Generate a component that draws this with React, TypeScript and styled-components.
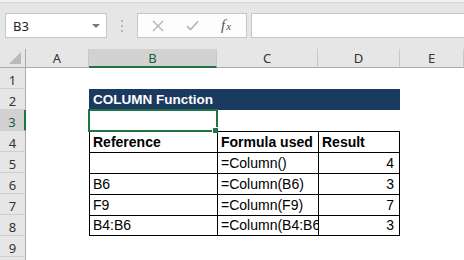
import React from 'react'
import styled, { createGlobalStyle, css } from 'styled-components'

const green = '#217346'
const chrome = '#e6e6e6'

const GlobalStyle = createGlobalStyle`
  html, body { margin: 0; padding: 0; background: #fff; }
  body {
    width: 464px;
    height: 260px;
    overflow: hidden;
    font-family: 'Liberation Sans', Arial, sans-serif;
  }
`

const Window = styled.div`
  display: flex;
  flex-direction: column;
  width: 464px;
  height: 260px;
  overflow: hidden;
`

/* ---- formula bar ---- */

const FormulaBar = styled.div`
  height: 49px;
  flex: none;
  box-sizing: border-box;
  padding: 13px 0 0 5px;
  display: flex;
  align-items: flex-start;
  background: linear-gradient(#f1f1f1 0 2px, #d6d6d6 2px 3px, ${chrome} 3px);
`

const NameBox = styled.div`
  width: 102px;
  height: 25px;
  box-sizing: border-box;
  border: 1px solid #c6c6c6;
  background: #fff;
  display: flex;
  align-items: center;
  justify-content: space-between;
  padding: 0 6px 0 7px;
  font-family: 'Noto Sans', 'Liberation Sans', sans-serif;
  font-size: 13px;
  color: #222;
`

const DropArrow = styled.span`
  width: 0;
  height: 0;
  border-style: solid;
  border-width: 4px 4px 0 4px;
  border-color: #777 transparent transparent transparent;
`

const Grip = styled.div`
  width: 30px;
  height: 25px;
  display: flex;
  flex-direction: column;
  align-items: center;
  justify-content: center;
  gap: 3px;

  span {
    width: 2px;
    height: 2px;
    background: #b5b5b5;
  }
`

const FxBox = styled.div`
  width: 110px;
  height: 25px;
  box-sizing: border-box;
  border: 1px solid #c6c6c6;
  background: #fdfdfd;
  display: flex;
  align-items: center;
  padding-left: 3px;
`

const FxButton = styled.span`
  width: 34px;
  height: 23px;
  display: flex;
  align-items: center;
  justify-content: center;
`

const FxLabel = styled.span`
  font-family: 'Liberation Serif', 'Times New Roman', serif;
  font-style: italic;
  color: #555;
  font-size: 15px;
  line-height: 1;

  small {
    font-size: 11px;
    margin-left: 1px;
  }
`

const FormulaInput = styled.div`
  flex: 1;
  margin-left: 4px;
  height: 25px;
  box-sizing: border-box;
  border: 1px solid #c6c6c6;
  border-right: none;
  background: #fff;
`

/* ---- sheet ---- */

const Sheet = styled.div`
  display: grid;
  grid-template-columns: 26px 63px 128px 101px 82px 64px;
  grid-template-rows: 19px;
  grid-auto-rows: 21px;
  background: #fff;
`

const Corner = styled.div`
  box-sizing: border-box;
  background: ${chrome};
  border-right: 1px solid #ababab;
  border-bottom: 1px solid #ababab;
  display: flex;
  align-items: flex-end;
  justify-content: flex-end;
  padding: 0 4px 3px 0;
`

const CornerMark = styled.span`
  width: 12px;
  height: 12px;
  background: #b9b9b9;
  clip-path: polygon(100% 0, 100% 100%, 0 100%);
`

const headerText = css`
  font-family: 'Noto Sans', 'Liberation Sans', sans-serif;
  font-size: 13px;
  color: #333;
`

const ColHeader = styled.div<{ $active?: boolean }>`
  ${headerText}
  box-sizing: border-box;
  background: ${chrome};
  border-right: 1px solid #c8c8c8;
  border-bottom: 1px solid #ababab;
  display: flex;
  align-items: center;
  justify-content: center;

  ${p => p.$active && css`
    background: #d2d2d2;
    border-bottom: 2px solid ${green};
    color: #1d5e3a;
  `}
`

const RowHeader = styled.div<{ $active?: boolean }>`
  ${headerText}
  box-sizing: border-box;
  background: ${chrome};
  border-right: 1px solid #ababab;
  border-bottom: 1px solid #cfcfcf;
  display: flex;
  align-items: center;
  justify-content: center;
  padding-top: 3px;

  ${p => p.$active && css`
    background: #d2d2d2;
    border-right: 2px solid ${green};
    color: #1d5e3a;
  `}
`

type CellProps = {
  $bold?: boolean
  $right?: boolean
  $boxed?: boolean
  $lastCol?: boolean
  $lastRow?: boolean
  $selected?: boolean
}

const Cell = styled.div<CellProps>`
  position: relative;
  box-sizing: border-box;
  display: flex;
  align-items: flex-end;
  justify-content: ${p => (p.$right ? 'flex-end' : 'flex-start')};
  padding: 0 ${p => (p.$right ? '5px' : '3px')} 2px 3px;
  font-size: 14px;
  line-height: 16px;
  font-weight: ${p => (p.$bold ? 700 : 400)};
  color: #000;
  white-space: nowrap;
  overflow: hidden;

  ${p => p.$boxed && css`
    border-top: 1px solid #000;
    border-left: 1px solid #000;
  `}
  ${p => p.$lastCol && css`border-right: 1px solid #000;`}
  ${p => p.$lastRow && css`border-bottom: 1px solid #000;`}

  ${p => p.$selected && css`
    overflow: visible;
    &::after {
      content: '';
      position: absolute;
      inset: -1px;
      border: 2px solid ${green};
      z-index: 2;
    }
    &::before {
      content: '';
      position: absolute;
      right: -1px;
      bottom: -2px;
      width: 5px;
      height: 5px;
      background: ${green};
      border-left: 1px solid #fff;
      border-top: 1px solid #fff;
      z-index: 3;
    }
  `}
`

const TitleCell = styled.div`
  grid-column: span 3;
  box-sizing: border-box;
  background: #1b3a5f;
  color: #fff;
  font-weight: 700;
  font-size: 13.5px;
  line-height: 16px;
  display: flex;
  align-items: flex-end;
  padding: 0 0 2px 4px;
  white-space: nowrap;
`

const tableRows = [
  { b: 'Reference', c: 'Formula used', d: 'Result', head: true },
  { b: '', c: '=Column()', d: '4' },
  { b: 'B6', c: '=Column(B6)', d: '3' },
  { b: 'F9', c: '=Column(F9)', d: '7' },
  { b: 'B4:B6', c: '=Column(B4:B6)', d: '3' },
]

const columns = ['A', 'B', 'C', 'D', 'E']

const CrossIcon = () => (
  <svg width="12" height="12" viewBox="0 0 12 12">
    <path d="M1 1L11 11M11 1L1 11" stroke="#b3b3b3" strokeWidth="1.4" fill="none" />
  </svg>
)

const CheckIcon = () => (
  <svg width="13" height="11" viewBox="0 0 13 11">
    <path d="M1 6L4.5 9.5L12 1.5" stroke="#b3b3b3" strokeWidth="1.6" fill="none" />
  </svg>
)

export default function App() {
  return <Window>
    <GlobalStyle />
    <FormulaBar>
      <NameBox>
        B3
        <DropArrow />
      </NameBox>
      <Grip><span /><span /><span /></Grip>
      <FxBox>
        <FxButton><CrossIcon /></FxButton>
        <FxButton><CheckIcon /></FxButton>
        <FxButton><FxLabel>f<small>x</small></FxLabel></FxButton>
      </FxBox>
      <FormulaInput />
    </FormulaBar>

    <Sheet>
      <Corner><CornerMark /></Corner>
      {columns.map(c => <ColHeader key={c} $active={c === 'B'}>{c}</ColHeader>)}

      <RowHeader>1</RowHeader>
      <Cell /><Cell /><Cell /><Cell /><Cell />

      <RowHeader>2</RowHeader>
      <Cell />
      <TitleCell>COLUMN Function</TitleCell>
      <Cell />

      <RowHeader $active>3</RowHeader>
      <Cell /><Cell $selected /><Cell /><Cell /><Cell />

      {tableRows.map((r, i) => {
        const last = i === tableRows.length - 1
        return <React.Fragment key={i}>
          <RowHeader>{i + 4}</RowHeader>
          <Cell />
          <Cell $boxed $lastRow={last} $bold={r.head}>{r.b}</Cell>
          <Cell $boxed $lastRow={last} $bold={r.head}>{r.c}</Cell>
          <Cell $boxed $lastRow={last} $lastCol $bold={r.head} $right={!r.head}>{r.d}</Cell>
          <Cell />
        </React.Fragment>
      })}

      <RowHeader>9</RowHeader>
      <Cell /><Cell /><Cell /><Cell /><Cell />
      <RowHeader>10</RowHeader>
      <Cell /><Cell /><Cell /><Cell /><Cell />
    </Sheet>
  </Window>
}
